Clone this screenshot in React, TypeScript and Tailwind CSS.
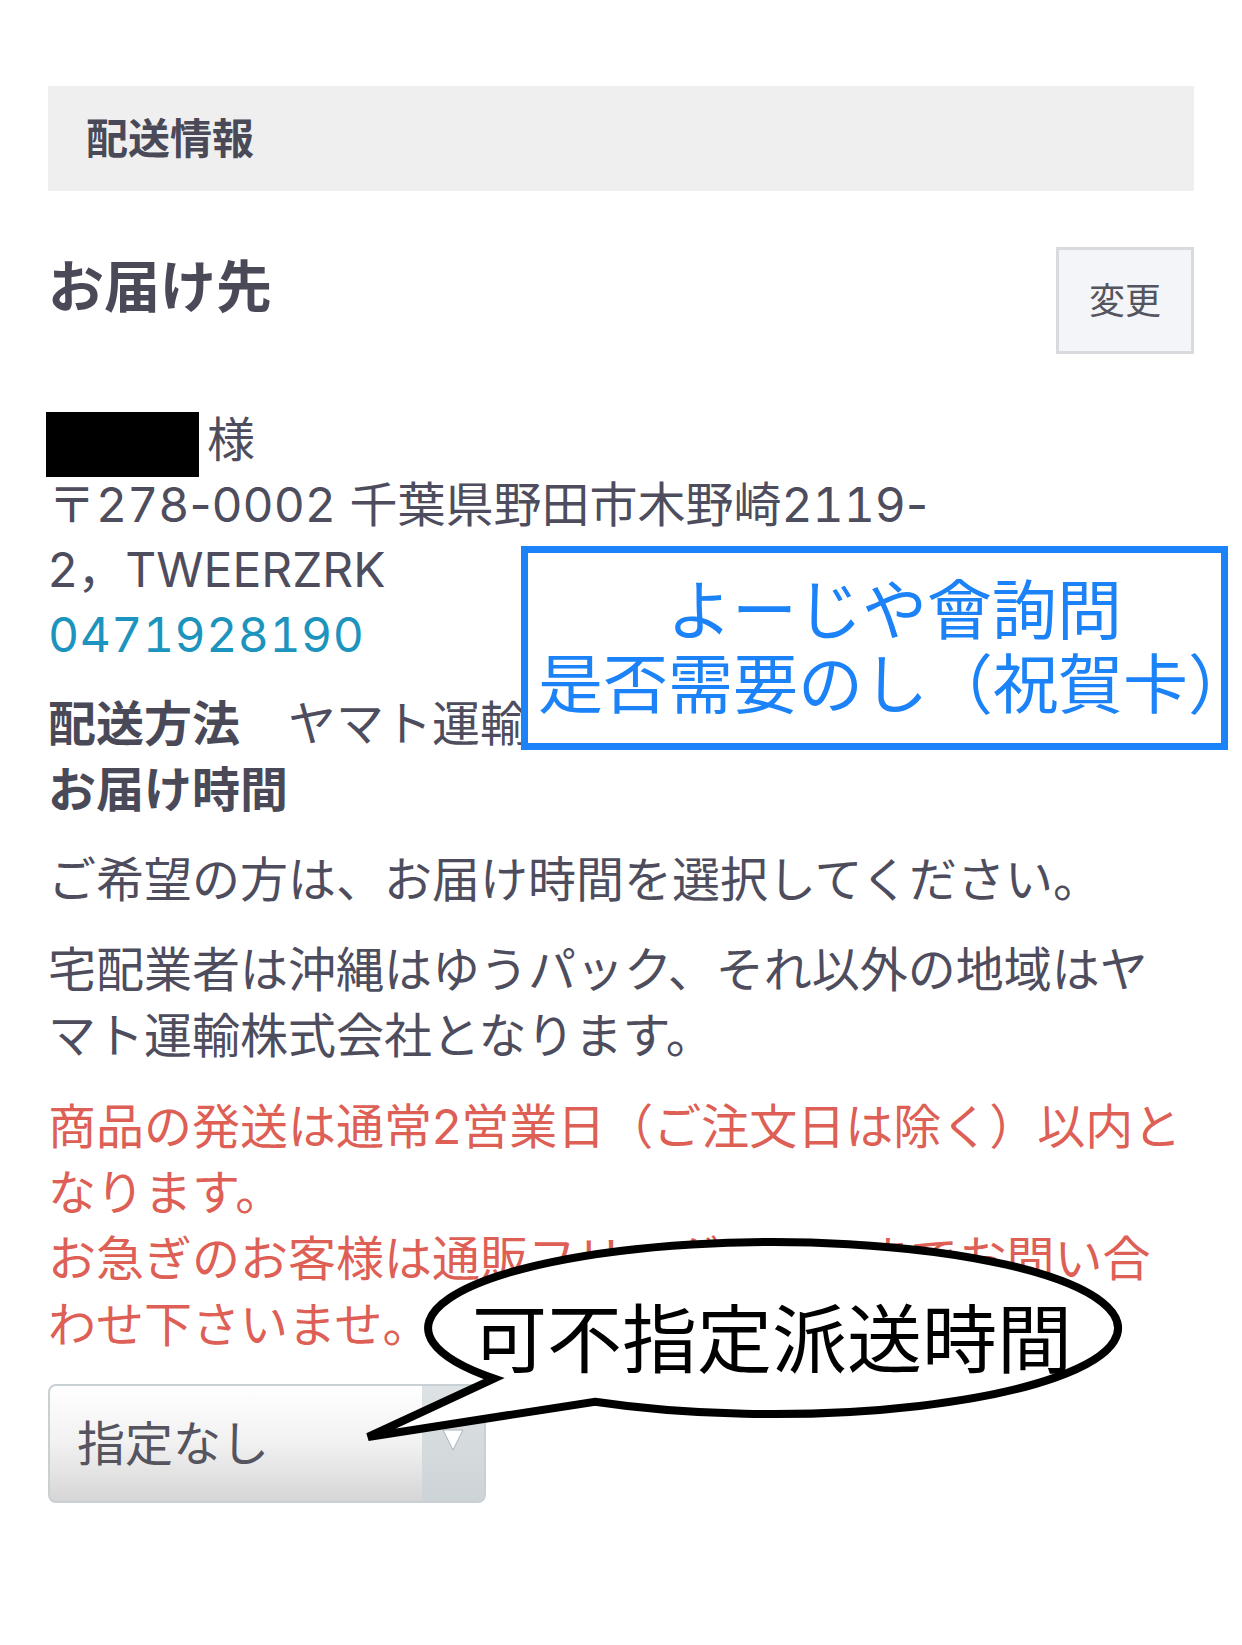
import React from "react";

export default function App() {
  return (
    <div className="relative min-h-[1645px] w-[1242px] overflow-hidden bg-white px-[48px] pt-[86px] font-['Inter','Noto_Sans_CJK_JP',sans-serif] text-[#4e4d5e]">
      {/* section header */}
      <div className="flex h-[105px] items-center bg-[#efefef] pl-[38px] text-[42px] font-bold leading-none text-[#4a4958]">
        配送情報
      </div>

      {/* destination heading */}
      <div className="mt-[56px] flex items-start justify-between">
        <h2 className="text-[56px] font-bold leading-[80px] text-[#4a4958]">お届け先</h2>
        <button className="flex h-[107px] w-[138px] items-center justify-center border-[3px] border-[#d8dadd] bg-[#f4f5f8] text-[36px] leading-none text-[#55555f]">
          変更
        </button>
      </div>

      {/* address */}
      <div className="mt-[53px] text-[48px] leading-[65px]">
        <div className="flex items-start">
          <span className="-mb-[5px] -ml-[2px] mt-[5px] inline-block h-[65px] w-[153px] bg-black" />
          <span className="ml-[8px]">様</span>
        </div>
        <div>
          〒<span className="tabular-nums">278</span>-<span className="tabular-nums">0002</span> 千葉県野田市木野崎
          <span className="tabular-nums">2119</span>-
        </div>
        <div>2，TWEERZRK</div>
        <div className="tabular-nums tracking-[0.5px] text-[#1c94bd]">0471928190</div>
      </div>

      <div className="mt-[24px] text-[48px] leading-[66px]">
        <div className="whitespace-nowrap">
          <span className="font-bold text-[#4a4958]">配送方法</span>　ヤマト運輸株式会社
        </div>
        <div className="font-bold text-[#4a4958]">お届け時間</div>
      </div>

      <p className="mt-[24px] text-[48px] leading-[66px]">ご希望の方は、お届け時間を選択してください。</p>
      <p className="mt-[24px] text-[48px] leading-[66px]">
        宅配業者は沖縄はゆうパック、それ以外の地域はヤマト運輸株式会社となります。
      </p>
      <p className="mt-[25px] text-[48px] leading-[66px] text-[#dd5f55]">
        商品の発送は通常2営業日（ご注文日は除く）以内となります。
        <br />
        お急ぎのお客様は通販フリーダイヤルまでお問い合わせ下さいませ。
      </p>

      {/* select */}
      <div className="mt-[26px] flex h-[119px] w-[438px] overflow-hidden rounded-[8px] border-2 border-[#c9d0d4] bg-linear-to-b from-[#ffffff] via-[#f1f1f1] to-[#d6d6d6]">
        <div className="flex flex-1 items-center pl-[27px] text-[48px] leading-none text-[#55545f]">
          指定なし
        </div>
        <div className="flex w-[62px] items-start justify-center bg-linear-to-b from-[#dde2e4] to-[#cdd4d7] pt-[42px]">
          <svg width="24" height="24" viewBox="0 0 24 24">
            <polygon points="2,2 22,2 12,22" fill="#ffffff" stroke="#aab3b8" strokeWidth="1" />
          </svg>
        </div>
      </div>

      {/* blue annotation box */}
      <div className="absolute left-[521px] top-[546px] flex h-[204px] w-[707px] flex-col items-start justify-center border-[7px] border-[#1b82f7] bg-white text-[65px] leading-[74px] text-[#1b82f7]">
        <div className="whitespace-nowrap pl-[139px]">よーじや會詢問</div>
        <div className="whitespace-nowrap pl-[10px]">是否需要のし（祝賀卡）</div>
      </div>

      {/* speech bubble */}
      <svg
        className="pointer-events-none absolute left-0 top-0"
        width="1242"
        height="1645"
        viewBox="0 0 1242 1645"
      >
        <path
          d="M 494 1378.6 A 345 86 0 1 1 595 1401.7 L 368 1437 Z"
          fill="#ffffff"
          stroke="#000000"
          strokeWidth="8"
          strokeLinejoin="miter"
        />
      </svg>
      <div className="absolute left-[472px] top-[1290px] whitespace-nowrap text-[75px] leading-[100px] text-black">
        可不指定派送時間
      </div>
    </div>
  );
}
